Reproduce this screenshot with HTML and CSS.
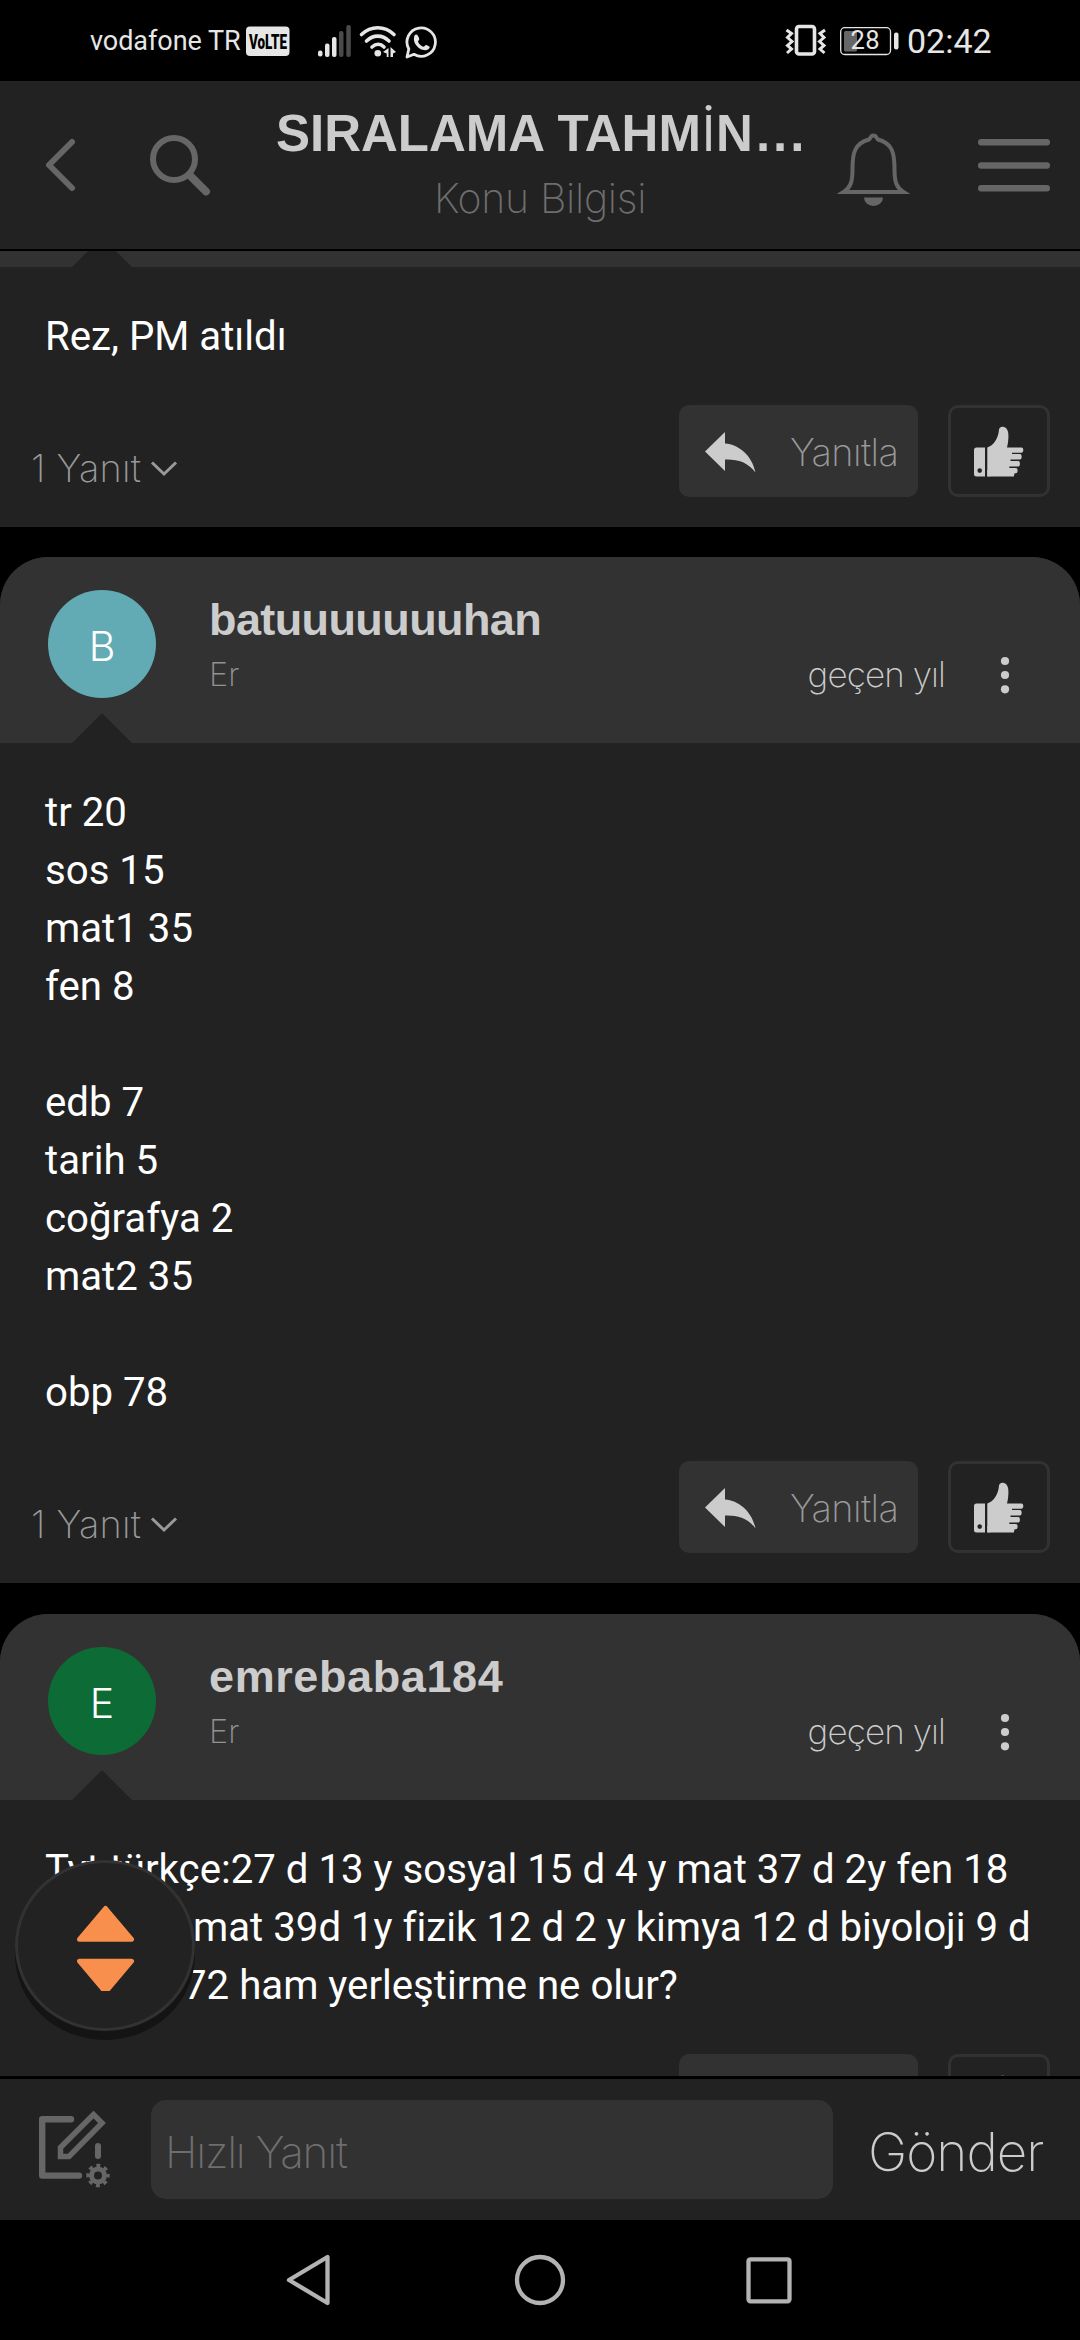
FILE: index.html
```html
<!DOCTYPE html>
<html lang="tr">
<head>
<meta charset="utf-8">
<title>Konu Bilgisi</title>
<link rel="stylesheet" href="styles.css">
</head>
<body>
<svg width="0" height="0" class="defs">
  <symbol id="reply" viewBox="704 429 54 44">
    <path d="M705 450.5 725 431v11.500c14 1 27 12 30.500 29C748 461 737 458 725 458.500V470z"/>
  </symbol>
  <symbol id="like" viewBox="972 424 54 54">
    <path d="M976.500 447.500h8.500v29h-8.500q-2.500 0-2.500-2.500v-24q0-2.500 2.500-2.500zm3.200 20.800a2.300 2.300 0 1 0 0 4.600 2.300 2.300 0 0 0 0-4.600z" fill-rule="evenodd"/>
    <path d="M987.300 476.500v-29c6-2 11-8.500 11.700-18 .4-4 8.500-4.500 9.300 4 .4 5-.3 9.500-1.300 14h14.500c2.500 0 2.300 5 0 5.200h-9.500v1.300h8c2.200 0 2.200 5.500 0 5.500h-9.500v1.500h7.800c2.200 0 2.200 5.500 0 5.500h-9v1.500h6.700c2.200 0 2 5.300 0 5.300h-7v.700h-0z"/>
    <path d="M987.300 470h28l-1.500 6.500h-26.500z"/>
  </symbol>
  <symbol id="down" viewBox="150 459 30 18">
    <path d="M153 462.500 165 474l12-11.500" fill="none" stroke="#999" stroke-width="3"/>
  </symbol>
  <symbol id="more" viewBox="0 0 20 40">
    <circle cx="10" cy="6" r="4.100"/><circle cx="10" cy="20" r="4.100"/><circle cx="10" cy="34.300" r="4.100"/>
  </symbol>
</svg>

<div class="phone">
  <div class="status">
    <span class="carrier">vodafone TR</span>
    <svg class="volte" width="44" height="30" viewBox="0 0 44 30"><rect y=".5" width="43.500" height="29.500" rx="4" fill="#e6e6e6"/><text x="3" y="22.500" textLength="38" lengthAdjust="spacingAndGlyphs">VoLTE</text></svg>
    <svg class="signals" width="126" height="36" viewBox="314 23 126 36">
      <g fill="#e6e6e6"><rect x="318" y="50.500" width="4.500" height="6" rx="2"/><rect x="325" y="43.500" width="4.500" height="13.500" rx="2"/><rect x="332" y="37" width="4.500" height="20" rx="2"/></g>
      <g fill="#4a4a4a"><rect x="339" y="31" width="4.500" height="26" rx="2"/><rect x="346.300" y="25" width="4.500" height="32" rx="2"/></g>
      <g fill="none" stroke="#e6e6e6" stroke-width="3.600" stroke-linecap="round"><path d="M361.500 34.500c9.500-9 23-9 32.500 0"/><path d="M366.500 41c7-6.500 15.500-6.500 22.500 0"/><path d="M372 47c4-3.500 8.500-3.500 12 0"/></g>
      <circle cx="377.800" cy="53.300" r="3.300" fill="#e6e6e6"/>
      <path d="M388.500 48v9h-1.800v-3.500l-3.700-1.500zM390.500 47l5.500 5-3 1.500v3.500h-2.500z" fill="#e6e6e6"/>
      <path d="M407 57l1.800-8a14.200 14.200 0 1 1 5.200 5.300z" fill="none" stroke="#e6e6e6" stroke-width="2.800" stroke-linejoin="round"/>
      <path d="M414.500 35.500c2-2 3.500-.5 4.800 3.500-.3 1.500-1.300 1.800-1.300 2.800 1 2.400 3 4 5.300 5 1.200 0 1.700-2 3-1.800 3.500 1.500 4.400 2 2.400 4-6 4.500-17.500-4.500-14.200-13.500z" fill="#e6e6e6"/>
    </svg>
    <svg class="battery" width="116" height="36" viewBox="784 23 116 36">
      <rect x="796.500" y="26.500" width="18" height="27.500" rx="2.500" fill="none" stroke="#e6e6e6" stroke-width="3.600"/>
      <path d="M786.500 30l5 3.500-4 4 4.500 4-4.500 4 4 3.500-4.500 4M825 30l-5 3.500 4 4-4.500 4 4.500 4-4 3.500 4.500 4" fill="none" stroke="#e6e6e6" stroke-width="3"/>
      <rect x="840.700" y="27.700" width="49.800" height="26.800" rx="4" fill="none" stroke="#e6e6e6" stroke-width="1.300"/>
      <rect x="844" y="31" width="13" height="20.500" rx="1.500" fill="#666"/>
      <rect x="894" y="32.500" width="4.500" height="17" rx="2" fill="#e6e6e6"/>
      <text x="850.500" y="49" textLength="29">28</text>
    </svg>
    <span class="clock">02:42</span>
  </div>

  <header class="appbar">
    <svg class="back" width="40" height="168" viewBox="40 81 40 168"><path d="M72 142 49 165l23 23" fill="none" stroke="#666" stroke-width="6" stroke-linecap="round" stroke-linejoin="round"/></svg>
    <svg class="search" width="66" height="168" viewBox="148 81 66 168"><circle cx="174" cy="159" r="21" fill="none" stroke="#666" stroke-width="6"/><path d="M189.500 175 206 191.500" stroke="#666" stroke-width="8" stroke-linecap="round"/></svg>
    <div class="heading">
      <h1>SIRALAMA TAHM<span class="thin-i">İ</span>N<span class="dots">...</span></h1>
      <div class="sub">Konu Bilgisi</div>
    </div>
    <svg class="bell" width="73" height="168" viewBox="836 81 73 168"><path d="M842.500 192c8-5 9-12 9-23 0-16 2-25.500 16.500-29.500 1.500-1 1.500-4 4.500-4s3 3 4.500 4c14.500 4 16.500 13.500 16.500 29.500 0 11 1 18 9 23z" fill="none" stroke="#666" stroke-width="4"/><path d="M863 197.500h19a9.500 8.500 0 0 1-19 0z" fill="#666"/></svg>
    <svg class="menu" width="72" height="168" viewBox="978 81 72 168"><path d="M981.200 142.300h65.600m-65.600 23.200h65.600m-65.600 22.800h65.600" stroke="#666" stroke-width="6.400" stroke-linecap="round"/></svg>
  </header>

  <main class="feed">
    <article class="post">
      <div class="post-head cut"></div>
      <p class="body">Rez, PM atıldı</p>
      <div class="actions">
        <span class="replies">1 Yanıt <svg width="30" height="18"><use href="#down"/></svg></span>
        <span class="btn-reply"><svg width="54" height="44"><use href="#reply"/></svg>Yanıtla</span>
        <span class="btn-like"><svg width="54" height="54"><use href="#like"/></svg></span>
      </div>
    </article>

    <article class="post">
      <div class="post-head">
        <div class="avatar teal">B</div>
        <div class="who"><div class="name tight">batuuuuuuuhan</div><div class="rank">Er</div></div>
        <div class="when">geçen yıl</div>
        <svg class="more" width="20" height="40"><use href="#more"/></svg>
      </div>
      <p class="body">tr 20<br>sos 15<br>mat1 35<br>fen 8<br><br>edb 7<br>tarih 5<br>coğrafya 2<br>mat2 35<br><br>obp 78</p>
      <div class="actions">
        <span class="replies">1 Yanıt <svg width="30" height="18"><use href="#down"/></svg></span>
        <span class="btn-reply"><svg width="54" height="44"><use href="#reply"/></svg>Yanıtla</span>
        <span class="btn-like"><svg width="54" height="54"><use href="#like"/></svg></span>
      </div>
    </article>

    <article class="post last">
      <div class="post-head">
        <div class="avatar green">E</div>
        <div class="who"><div class="name wide">emrebaba184</div><div class="rank">Er</div></div>
        <div class="when">geçen yıl</div>
        <svg class="more" width="20" height="40"><use href="#more"/></svg>
      </div>
      <p class="body">Tyt türkçe:27 d 13 y sosyal 15 d 4 y mat 37 d 2y fen 18<br><span class="lead">1y ayt</span>mat 39d 1y fizik 12 d 2 y kimya 12 d biyoloji 9 d<br><span class="lead end">2y obp.</span>72 ham yerleştirme ne olur?</p>
      <div class="actions">
        <span class="btn-reply"><svg width="54" height="44"><use href="#reply"/></svg></span>
        <span class="btn-like"><svg width="54" height="54"><use href="#like"/></svg></span>
      </div>
    </article>

    <div class="jump">
      <svg width="60" height="90" viewBox="75 1905 60 90"><g fill="#f98f4d" stroke="#f98f4d" stroke-width="5" stroke-linejoin="round"><path d="M105.500 1912.500 131.500 1943.300H79.500z"/><path d="M105.500 1996 131.500 1965.200H79.500z"/></g></svg>
    </div>
  </main>

  <footer class="composer">
    <svg class="compose" width="72" height="78" viewBox="38 2111 72 78">
      <g fill="none" stroke="#666" stroke-width="6.400">
        <path d="M71 2119.300H42.200v56.300H79" stroke-linecap="round" stroke-linejoin="round"/>
        <path d="M60.500 2156.500v-9L93.500 2114.500l8.500 8.500-33 33.500z" stroke-width="5.500"/>
        <path d="M98 2146v10" stroke-width="6" stroke-linecap="round"/>
        <circle cx="98" cy="2175.500" r="6.500" stroke-width="5"/>
        <circle cx="98" cy="2175.500" r="10" stroke-width="3.400" stroke-dasharray="3.900 3.954" stroke-dashoffset="1.950"/>
      </g>
    </svg>
    <input class="field" type="text" placeholder="Hızlı Yanıt">
    <span class="send">Gönder</span>
  </footer>

  <nav class="sysnav">
    <svg width="48" height="56" viewBox="285 2252 48 56"><path d="M327.500 2257v46L289 2280z"/></svg>
    <svg width="56" height="56" viewBox="512 2252 56 56"><circle cx="540" cy="2280" r="23"/></svg>
    <svg width="52" height="56" viewBox="743 2252 52 56"><rect x="748.500" y="2259.300" width="41" height="42" rx="2"/></svg>
  </nav>
</div>
</body>
</html>
```
FILE: styles.css
```css
* { box-sizing: border-box; }
body { margin: 0; background: #000; }
svg { display: block; flex: none; }
.defs { position: absolute; }

.phone {
  width: 1080px;
  height: 2340px;
  display: flex;
  flex-direction: column;
  background: #000;
  overflow: hidden;
  font-family: Inter, "Liberation Sans", sans-serif;
  font-weight: 250;
}

/* system status bar */
.status {
  flex: none;
  display: flex;
  height: 81px;
  padding-left: 90px;
  color: #e6e6e6;
  font-family: Roboto, sans-serif;
  font-weight: 400;
}
.carrier { width: 156px; margin-top: 21px; font-size: 27px; line-height: 40px; letter-spacing: -0.05px; white-space: nowrap; }
.volte { margin-top: 26px; }
.volte text { font: 900 21px Roboto, sans-serif; fill: #000; }
.signals { margin: 23px 0 0 24px; }
.battery { margin: 23px 0 0 344px; }
.battery text { font: 400 25.500px Roboto, sans-serif; fill: #e6e6e6; }
.clock { margin: 21px 0 0 7px; font-size: 34px; line-height: 40px; }

/* title bar */
.appbar {
  flex: none;
  display: flex;
  height: 170px;
  background: #222;
  border-bottom: 2px solid #000;
}
.back { margin-left: 40px; }
.search { margin-left: 68px; }
.heading { width: 530px; margin: 23px 0 0 61px; text-align: center; white-space: nowrap; }
.heading h1 { margin: 0 0 0 1px; text-align: left; color: #ccc; font: 700 51px/60px "Liberation Sans", sans-serif; }
.thin-i { margin: 0 1px; font-family: Inter, sans-serif; font-weight: 400; font-size: 49px; }
.dots { letter-spacing: 3px; margin-left: 3px; }
.sub { margin-top: 9px; color: #6e6e6e; font-size: 41px; line-height: 50px; letter-spacing: -0.300px; }
.bell { margin-left: 32px; }
.menu { margin-left: 68px; }

/* posts */
.feed { position: relative; flex: none; height: 1825px; overflow: hidden; }
.post { background: #222; border-radius: 48px 48px 0 0; overflow: hidden; margin-top: 30px; }
.post:first-child { margin-top: 0; border-radius: 0; }
.post.last { margin-top: 31px; }
.post-head { position: relative; display: flex; height: 186px; padding-left: 48px; background: #323232; }
.post-head.cut { height: 16px; overflow: hidden; }
.post-head::after {
  content: "";
  position: absolute;
  left: 72px;
  bottom: 0;
  border: solid transparent;
  border-width: 0 30px 30px;
  border-bottom-color: #222;
}
.avatar {
  flex: none;
  width: 108px;
  height: 108px;
  margin-top: 33px;
  padding-top: 4px;
  border-radius: 50%;
  color: #fff;
  font-size: 41px;
  font-weight: 300;
  line-height: 104px;
  text-align: center;
}
.teal { background: #62aab4; }
.green { background: #0d6c36; }
.who { flex: 1; margin: 36px 0 0 53px; }
.name { color: #ccc; font: 700 45px/54px "Liberation Sans", sans-serif; }
.tight { letter-spacing: -0.600px; }
.wide { letter-spacing: 0.600px; }
.rank { margin-top: 8px; color: #929292; font-size: 32.500px; line-height: 40px; }
.when { margin-top: 97px; color: #ccc; font-size: 35px; line-height: 40px; letter-spacing: -0.900px; }
.more { margin: 98px 65px 0 50px; fill: #ccc; }
.body { margin: 0; padding: 41px 0 39px 45px; color: #fff; font: 400 40.200px/58px Roboto, sans-serif; white-space: nowrap; }
.lead { display: inline-block; width: 148px; }
.lead.end { width: 139px; text-align: right; }

.actions { display: flex; height: 122px; padding: 0 30px 30px 31px; color: #999; font-size: 38px; }
.replies { display: flex; align-items: center; height: 40px; margin-top: 43px; gap: 8px; line-height: 40px; letter-spacing: 0.200px; }
.btn-reply {
  display: flex;
  align-items: center;
  width: 239px;
  height: 92px;
  margin-left: auto;
  padding: 2px 0 0 25px;
  gap: 32px;
  border-radius: 10px;
  background: #323232;
  fill: #ccc;
  line-height: 95px;
  letter-spacing: -0.600px;
}
.btn-like {
  display: flex;
  width: 102px;
  height: 92px;
  margin-left: 30px;
  padding: 16px 0 0 21px;
  border: 3px solid #323232;
  border-radius: 10px;
  fill: #ccc;
}

/* floating page jump control */
.jump {
  position: absolute;
  left: 15px;
  top: 1609px;
  display: flex;
  align-items: center;
  justify-content: center;
  width: 180px;
  height: 171px;
  border: 3px solid #323232;
  border-radius: 50%;
  background: #222;
  box-shadow: 0 9px 0 #141414;
}

/* quick reply */
.composer {
  flex: none;
  display: flex;
  align-items: center;
  height: 144px;
  border-top: 3px solid #000;
  background: #222;
}
.compose { margin-left: 38px; }
.field {
  width: 682px;
  height: 99px;
  margin-left: 41px;
  padding: 5px 14px 0;
  border: 0;
  border-radius: 15px;
  outline: 0;
  background: #323232;
  color: #ccc;
  font: 250 44px Inter, sans-serif;
  letter-spacing: -1.200px;
}
.field::placeholder { color: #6e6e6e; opacity: 1; }
.send { margin-left: 35px; padding-top: 4px; color: #ccc; font-size: 53px; letter-spacing: -1px; }

/* system navigation */
.sysnav { flex: 1; display: flex; align-items: center; padding-left: 285px; fill: none; stroke: #b3b3b3; stroke-width: 4.300px; stroke-linejoin: round; }
.sysnav svg + svg { margin-left: 179px; }
.sysnav svg + svg + svg { margin-left: 175px; }
```
